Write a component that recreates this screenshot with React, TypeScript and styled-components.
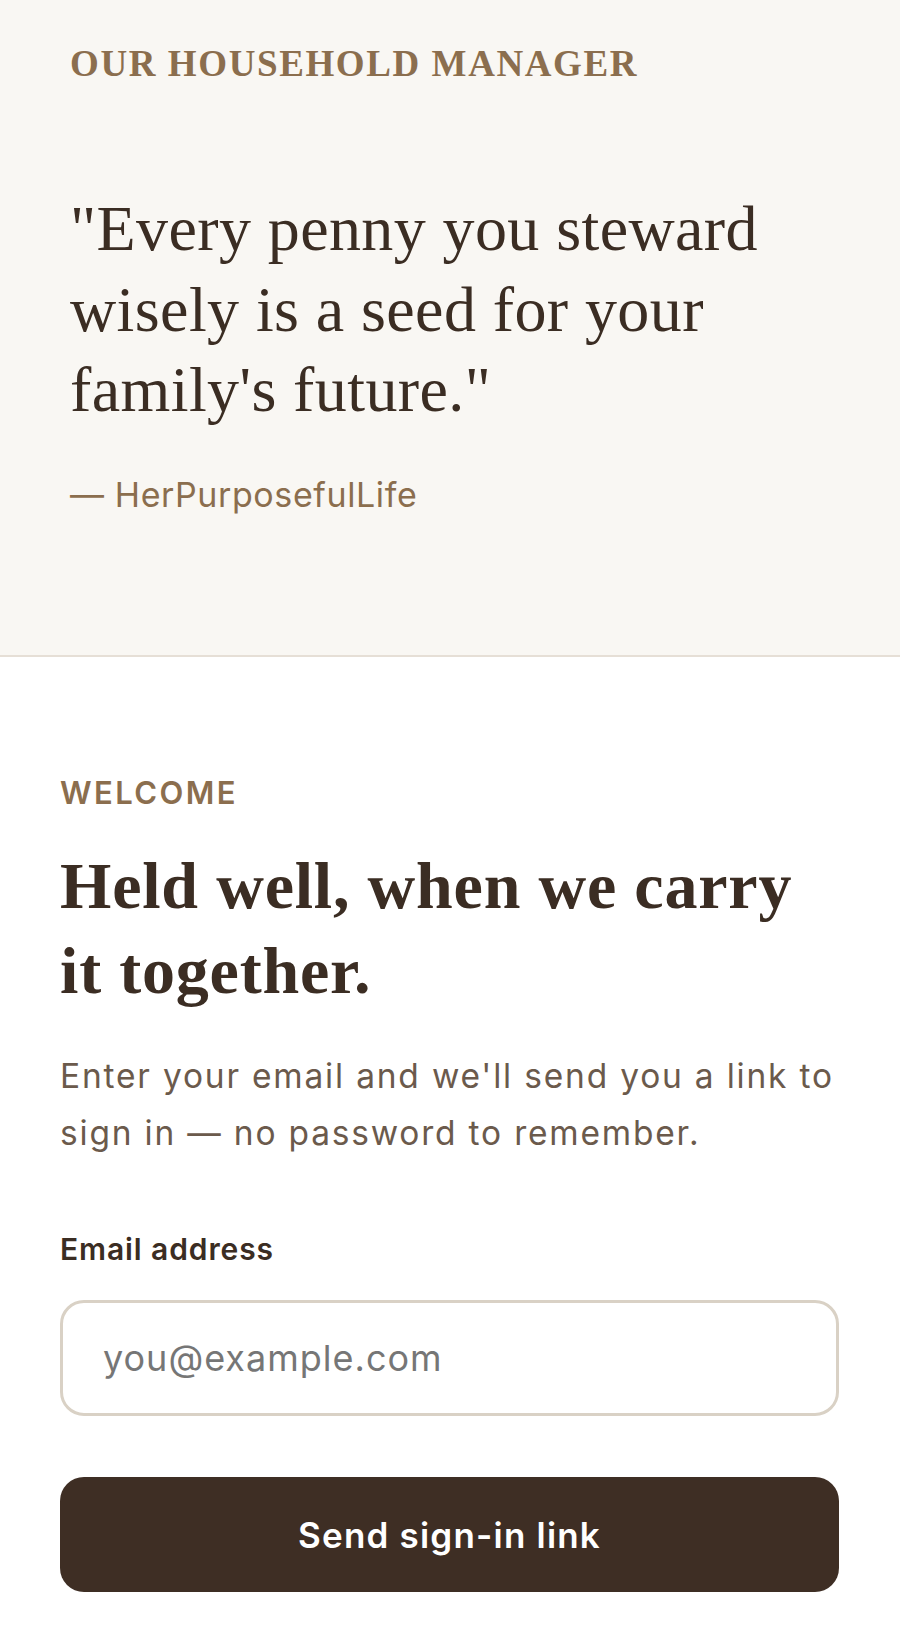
import React from "react";
import styled, { createGlobalStyle } from "styled-components";

const GlobalStyle = createGlobalStyle`
  * { box-sizing: border-box; }
  html, body { margin: 0; padding: 0; background: #ffffff; }
  body { font-family: Inter, "Noto Sans", sans-serif; -webkit-font-smoothing: antialiased; }
`;

const Page = styled.main`
  display: flex;
  flex-direction: column;
  width: 100%;
  min-height: 1637px;
  background: #ffffff;
`;

const Hero = styled.section`
  display: flex;
  flex-direction: column;
  background: #f9f7f3;
  border-bottom: 2px solid #e6dfd6;
  padding: 42px 70px 137px;
`;

const Brand = styled.div`
  font-family: "Liberation Serif", "Times New Roman", serif;
  font-weight: 700;
  font-size: 37px;
  line-height: 1.2;
  letter-spacing: 1.6px;
  text-transform: uppercase;
  color: #8b6e4e;
`;

const Quote = styled.blockquote`
  margin: 103px 0 0;
  font-family: "Liberation Serif", "Times New Roman", serif;
  font-weight: 400;
  font-size: 64px;
  line-height: 80.5px;
  letter-spacing: 0.4px;
  color: #3b2d23;
`;

const Attribution = styled.p`
  margin: 40px 0 0;
  font-family: Inter, "Noto Sans", sans-serif;
  font-size: 34px;
  line-height: 1.4;
  letter-spacing: 0.6px;
  color: #8b6e4e;
`;

const Form = styled.section`
  display: flex;
  flex-direction: column;
  padding: 117px 61px 45px 60px;
`;

const Eyebrow = styled.div`
  font-family: Inter, "Noto Sans", sans-serif;
  font-weight: 600;
  font-size: 31px;
  line-height: 1.2;
  letter-spacing: 2.4px;
  text-transform: uppercase;
  color: #8b6e4e;
`;

const Heading = styled.h1`
  margin: 31px 0 0;
  font-family: "Liberation Serif", "Times New Roman", serif;
  font-weight: 700;
  font-size: 66px;
  line-height: 85px;
  letter-spacing: 0.8px;
  color: #3b2d23;
`;

const Lead = styled.p`
  margin: 35px 0 0;
  font-family: Inter, "Noto Sans", sans-serif;
  font-size: 33.5px;
  line-height: 57.7px;
  letter-spacing: 1.8px;
  color: #6b5a4c;
`;

const Field = styled.label`
  display: flex;
  flex-direction: column;
  gap: 30px;
  margin-top: 65px;
`;

const FieldLabel = styled.span`
  font-family: Inter, "Noto Sans", sans-serif;
  font-weight: 600;
  font-size: 30px;
  line-height: 42px;
  letter-spacing: 0.9px;
  color: #3b2d23;
`;

const Input = styled.input`
  width: 100%;
  height: 116px;
  padding: 0 40px;
  border: 3px solid #d9d1c5;
  border-radius: 24px;
  background: #ffffff;
  font-family: Inter, "Noto Sans", sans-serif;
  font-size: 36px;
  letter-spacing: 1px;
  color: #3b2d23;
  outline: none;
  &::placeholder { color: #767676; }
`;

const Submit = styled.button`
  margin-top: 61px;
  width: 100%;
  height: 115px;
  border: none;
  border-radius: 24px;
  background: #3e2e24;
  color: #ffffff;
  font-family: Inter, "Noto Sans", sans-serif;
  font-weight: 600;
  font-size: 35px;
  letter-spacing: 1.2px;
  cursor: pointer;
`;

export default function App() {
  return (
    <>
      <GlobalStyle />
      <Page>
        <Hero>
          <Brand>Our Household Manager</Brand>
          <Quote>"Every penny you steward wisely is a seed for your family's future."</Quote>
          <Attribution>— HerPurposefulLife</Attribution>
        </Hero>
        <Form as="form" onSubmit={(e: React.FormEvent) => e.preventDefault()}>
          <Eyebrow>Welcome</Eyebrow>
          <Heading>Held well, when we carry it together.</Heading>
          <Lead>Enter your email and we'll send you a link to sign in — no password to remember.</Lead>
          <Field>
            <FieldLabel>Email address</FieldLabel>
            <Input type="email" placeholder="you@example.com" />
          </Field>
          <Submit type="submit">Send sign-in link</Submit>
        </Form>
      </Page>
    </>
  );
}
